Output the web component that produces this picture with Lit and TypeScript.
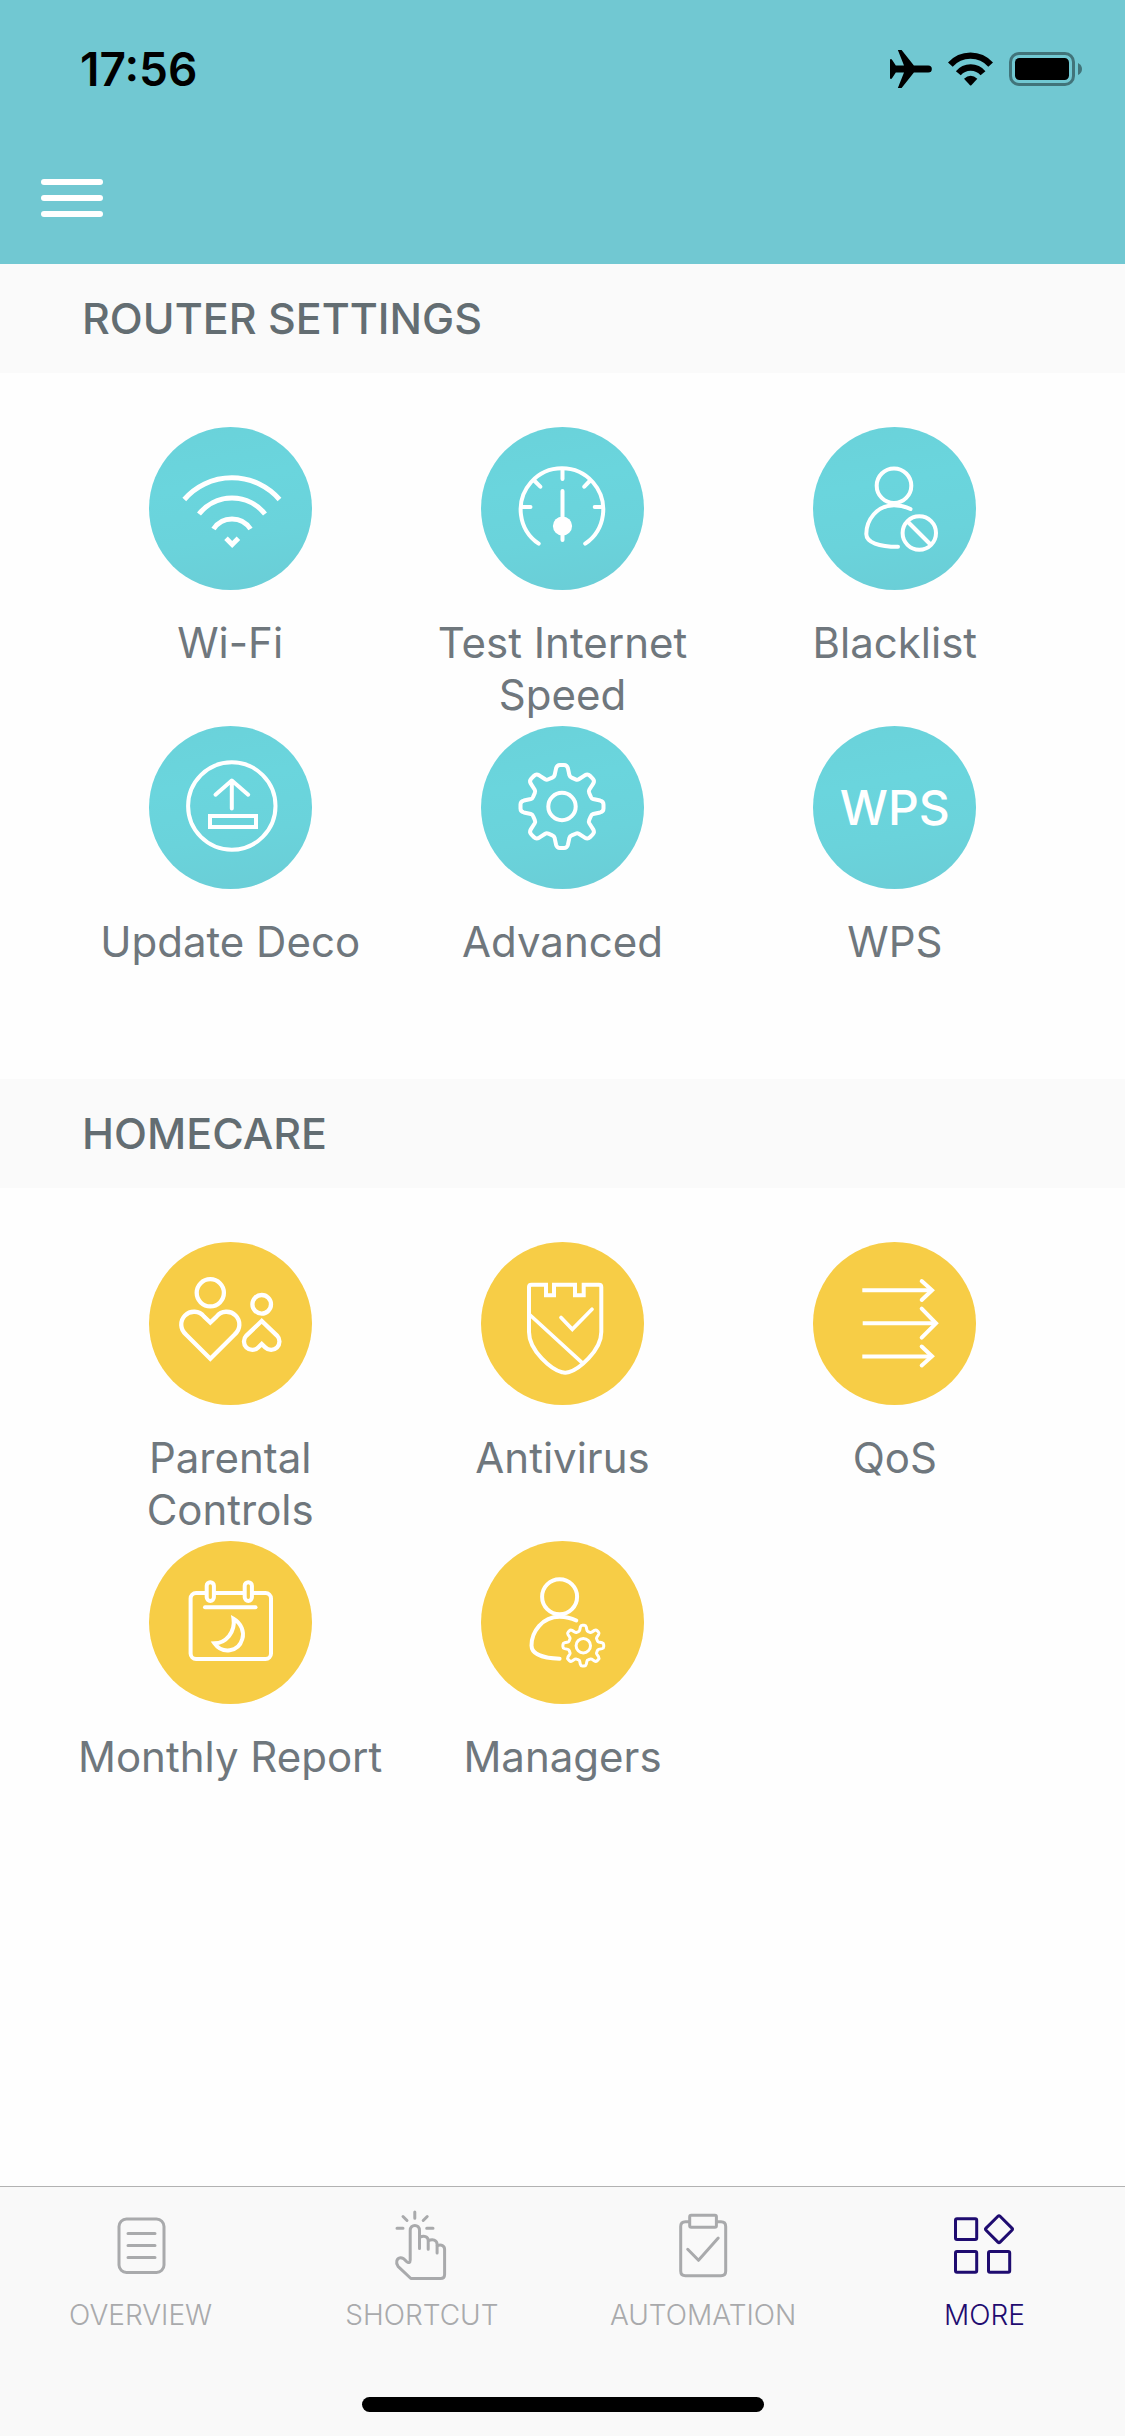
import { LitElement, html, svg, css, nothing, SVGTemplateResult } from "lit";
import { customElement, property } from "lit/decorators.js";

type IconName =
  | "wifi" | "speed" | "blacklist" | "update" | "advanced" | "wps"
  | "parental" | "antivirus" | "qos" | "report" | "managers";
type Tone = "teal" | "amber";

interface Tile {
  label: string;
  icon: IconName;
}

interface Section {
  title: string;
  tone: Tone;
  tiles: Tile[];
}

interface Tab {
  label: string;
  glyph: SVGTemplateResult;
  active?: boolean;
}

/** Outline of an eight-toothed gear whose tooth tips lie `r` from the centre. */
function gearPath(cx: number, cy: number, r: number): string {
  const k = r / 41.3;
  const parts: string[] = [];
  for (let i = 0; i < 8; i++) {
    const a = (i * Math.PI) / 4;
    const p = (x: number, y: number) => {
      const px = cx + k * (x * Math.cos(a) - y * Math.sin(a));
      const py = cy + k * (x * Math.sin(a) + y * Math.cos(a));
      return `${px.toFixed(2)} ${py.toFixed(2)}`;
    };
    parts.push(
      `${i === 0 ? "M" : "L"}${p(28.7, -9.6)}`,
      `Q${p(29.4, -7.8)} ${p(31, -7.4)}`,
      `L${p(38, -5.9)}`,
      `Q${p(41.3, -5)} ${p(41.3, -2)}`,
      `L${p(41.3, 2)}`,
      `Q${p(41.3, 5)} ${p(38, 5.9)}`,
      `L${p(31, 7.4)}`,
      `Q${p(29.4, 7.8)} ${p(28.7, 9.6)}`
    );
  }
  return parts.join("") + "Z";
}

const icons: Record<Exclude<IconName, "wps">, SVGTemplateResult> = {
  wifi: svg`
    <g stroke-width="5" stroke-linecap="butt" stroke-linejoin="miter">
      <path d="M35.300 72.500A63 63 0 0 1 130.500 72.500"/>
      <path d="M50 87A42 42 0 0 1 116 87"/>
      <path d="M64.500 102A22 22 0 0 1 101.500 102"/>
      <path d="M77 111.300L83.200 117.500L89.400 111.300"/>
    </g>`,
  speed: svg`
    <path d="M57.700 116.700A41.300 41.300 0 1 1 104.200 116.700"/>
    <path d="M40 80H49.500M113.700 80H122M53.700 54L59.300 59.700M108.700 54L103.300 59.700M81.500 42V52M81.500 64V113"/>
    <circle cx="81.500" cy="99" r="9.600" fill="#fff" stroke="none"/>`,
  blacklist: svg`
    <circle cx="81" cy="58.700" r="17.300"/>
    <path d="M97.500 82C92 79.300 86.500 78.200 81 78.200C63.500 78.200 53.300 93.500 53.300 107C53.300 115.500 66 119.800 85 119.800"/>
    <circle cx="106.300" cy="106" r="16.700"/>
    <path d="M95 95L117.500 117.500"/>`,
  update: svg`
    <circle cx="82.800" cy="80" r="43.700"/>
    <path d="M66.500 68.700L82.800 54.500L99.200 68.700M82.800 55V82.500"/>
    <rect x="61" y="90" width="46" height="11" stroke-linejoin="miter"/>`,
  advanced: svg`
    <path d="${gearPath(81, 80.5, 41.5)}"/>
    <circle cx="81" cy="80.500" r="13.700"/>`,
  parental: svg`
    <g stroke-width="4.300" stroke-linejoin="miter">
      <circle cx="61.300" cy="50.800" r="13.600"/>
      <path d="M61.300 80.500L55 74.500A12.800 12.800 0 1 0 37 92.500L61.300 116.800L85.600 92.500A12.800 12.800 0 1 0 67.600 74.500Z"/>
      <circle cx="112.700" cy="62.300" r="9.300"/>
      <path d="M112.700 79L97.400 93.600A8.300 8.300 0 1 0 109.200 105.400L112.700 102L116.200 105.400A8.300 8.300 0 1 0 128 93.600Z"/>
    </g>`,
  antivirus: svg`
    <path stroke-linejoin="miter" d="M50.500 42.700H65V53.300H73V42.700H94V53.300H102.700V42.700H118Q120.300 42.700 120.300 45V90C120.300 109 97 128 87.500 130.200Q84.200 131.300 81 130.200C71 128 48 109 48 90V45Q48 42.700 50.500 42.700Z"/>
    <path stroke-width="3.700" d="M49 73L101 120.700"/>
    <path stroke-width="3.700" stroke-linejoin="miter" d="M80 75.500L91.300 87.300L111 67.300"/>`,
  qos: svg`
    <g stroke-linejoin="miter">
      <path stroke-linecap="butt" d="M49.300 48.200H119M49.700 81.300H123M49.300 114.500H119"/>
      <path d="M108.700 39L119 48.300L108.700 58M108.700 66.700L123 81.300L108.700 95.700M108.700 104.500L119 114.300L108.700 123.500"/>
    </g>`,
  report: svg`
    <rect x="41.600" y="52" width="80.400" height="66" rx="5.500"/>
    <rect x="57.700" y="41.200" width="7.200" height="18.700" rx="3.600" fill="#f7cd46"/>
    <rect x="95.700" y="41.200" width="7.200" height="18.700" rx="3.600" fill="#f7cd46"/>
    <path d="M56 66.300H106.500"/>
    <path stroke-linejoin="miter" d="M84.500 77.800C92.500 82.500 95.500 91 93.300 98C89.500 111.500 73 113 65.500 102.300C77 102 86.500 91 84.500 77.800Z"/>`,
  managers: svg`
    <circle cx="78.600" cy="55.700" r="17.500"/>
    <path d="M95.300 79.500C90 77 84 75.800 78.600 75.800C61 75.800 50.500 91 50.500 104.500C50.500 113 62 117.200 78.600 117.700"/>
    <g stroke-width="3">
      <path d="${gearPath(102.3, 104.7, 20.4)}"/>
      <circle cx="102.300" cy="104.700" r="7.200"/>
    </g>`
};

const sections: Section[] = [
  {
    title: "ROUTER SETTINGS",
    tone: "teal",
    tiles: [
      { label: "Wi-Fi", icon: "wifi" },
      { label: "Test Internet Speed", icon: "speed" },
      { label: "Blacklist", icon: "blacklist" },
      { label: "Update Deco", icon: "update" },
      { label: "Advanced", icon: "advanced" },
      { label: "WPS", icon: "wps" }
    ]
  },
  {
    title: "HOMECARE",
    tone: "amber",
    tiles: [
      { label: "Parental Controls", icon: "parental" },
      { label: "Antivirus", icon: "antivirus" },
      { label: "QoS", icon: "qos" },
      { label: "Monthly Report", icon: "report" },
      { label: "Managers", icon: "managers" }
    ]
  }
];

const tabs: Tab[] = [
  {
    label: "OVERVIEW",
    glyph: svg`
      <rect x="16" y="12" width="45" height="53.500" rx="7.500"/>
      <path d="M25 26.400H52M25 38.400H52M25 50.400H52"/>`
  },
  {
    label: "SHORTCUT",
    glyph: svg`
      <path d="M30.800 5V11.300M19 9.500L23 13.500M43.200 9.500L39.200 13.500M13 21.300H19M42.700 21.300H49"/>
      <path d="M35.500 41.500V23.500C35.500 16.700 26.200 16.700 26.200 23.500V53C26.200 56 24.500 56.300 22.500 54.500C20 51.500 18.500 50.700 16.500 50.800C12.500 51.300 11.500 55.500 14 59.300L26.900 71.500H56.500Q60.600 71.500 60.600 67.500V42.500C60.600 38.500 57.500 37.300 53.300 38.500"/>
      <path d="M35.500 30.500C40 28 44.200 29.500 44.200 33.500V42.300M44.200 34C48.500 31.500 53.100 33 53.100 37.500V46"/>`
  },
  {
    label: "AUTOMATION",
    glyph: svg`
      <path d="M24.500 14.700H20.500Q15.700 14.700 15.700 19.500V64Q15.700 68.700 20.500 68.700H56Q60.700 68.700 60.700 64V19.500Q60.700 14.700 56 14.700H51.500"/>
      <rect x="24.700" y="8.300" width="26.700" height="12" rx="1.500"/>
      <path d="M22.700 42.300L33.500 53.300L53.200 31"/>`
  },
  {
    label: "MORE",
    active: true,
    glyph: svg`
      <rect x="9.500" y="11.700" width="21.200" height="20.700" rx="1.500"/>
      <rect x="9.500" y="44.500" width="21.200" height="20.700" rx="1.500"/>
      <rect x="42.500" y="44.500" width="21.200" height="20.700" rx="1.500"/>
      <rect x="43.100" y="12.300" width="19.800" height="19.800" rx="1.500" transform="rotate(45 53 22.200)"/>`
  }
];

@customElement("status-bar")
export class StatusBar extends LitElement {
  static styles = css`
    :host {
      display: flex;
      align-items: center;
      justify-content: space-between;
      box-sizing: border-box;
      height: 132px;
      padding: 6px 43px 0 80px;
      color: #000;
    }
    .time {
      font-size: 46px;
      line-height: 52px;
      font-weight: 600;
    }
    .icons {
      display: flex;
      align-items: center;
      gap: 16px;
    }
    svg {
      display: block;
    }
  `;

  render() {
    return html`
      <span class="time">17:56</span>
      <div class="icons">
        <svg width="42" height="38" viewBox="0 0 123 111" aria-hidden="true">
          <path d="M0 27H5L17 45H41L23 0H34L70 45H112A10.500 10.500 0 0 1 112 66H70L34 111H23L41 66H17L5 84H0Z"/>
        </svg>
        <svg width="45" height="34" viewBox="0 0 135 100" aria-hidden="true">
          <g fill="none" stroke="#000" stroke-width="19">
            <path d="M7 37A81 81 0 0 1 128 37"/>
            <path d="M31 63A48 48 0 0 1 105 63"/>
          </g>
          <path d="M48 79Q68 61 88 79L70 98.500Q68 100 66 98.500Z"/>
        </svg>
        <svg width="73" height="34" viewBox="0 0 73 34" aria-hidden="true">
          <rect x="1.500" y="1.500" width="63" height="31" rx="8.500" fill="none" stroke="#000" stroke-opacity=".42" stroke-width="3"/>
          <rect x="6" y="6" width="54" height="22" rx="4.500"/>
          <path d="M69 11Q73 13 73 17Q73 21 69 23Z" fill-opacity=".42"/>
        </svg>
      </div>
    `;
  }
}

@customElement("settings-tile")
export class SettingsTile extends LitElement {
  static styles = css`
    :host {
      display: flex;
    }
    .tile {
      flex: 1;
      display: flex;
      flex-direction: column;
      align-items: center;
      gap: 27px;
      margin: 0;
      padding: 0 10px;
      border: 0;
      background: none;
      color: #6f777d;
      font: inherit;
      font-size: 42px;
      line-height: 52px;
      text-align: center;
      cursor: pointer;
    }
    .disc {
      display: flex;
      align-items: center;
      justify-content: center;
      flex: none;
      width: 163px;
      height: 163px;
      border-radius: 50%;
      color: #fff;
    }
    .teal {
      background: linear-gradient(170deg, #6ad2da 0%, #6ad5dd 35%, #6ad3db 65%, #6acdd6 100%);
    }
    .amber {
      background: #f7cd46;
    }
    .disc svg {
      display: block;
      width: 100%;
      height: 100%;
      fill: none;
      stroke: #fff;
      stroke-width: 4;
      stroke-linecap: round;
      stroke-linejoin: round;
    }
    .word {
      font-size: 48px;
      font-weight: 500;
    }
  `;

  @property() label = "";
  @property() icon: IconName = "wifi";
  @property() tone: Tone = "teal";

  render() {
    return html`
      <button class="tile" type="button">
        <span class="disc ${this.tone}">
          ${this.icon === "wps"
            ? html`<span class="word">WPS</span>`
            : html`<svg viewBox="0 0 163 163" aria-hidden="true">${icons[this.icon]}</svg>`}
        </span>
        <span>${this.label}</span>
      </button>
    `;
  }
}

@customElement("tab-bar")
export class TabBar extends LitElement {
  static styles = css`
    :host {
      display: flex;
      flex-direction: column;
      align-items: center;
      justify-content: space-between;
      box-sizing: border-box;
      min-height: 250px;
      padding: 20px 0 24px;
      border-top: 1px solid #b2b2b2;
      background: #f9f9f9;
    }
    nav {
      display: grid;
      grid-template-columns: repeat(4, 1fr);
      width: 100%;
    }
    .tab {
      display: flex;
      flex-direction: column;
      align-items: center;
      gap: 16px;
      color: #a9aaac;
      font-size: 28px;
      line-height: 32px;
      font-weight: 300;
      text-decoration: none;
    }
    .active {
      color: #1f0c70;
    }
    .tab svg {
      display: block;
      width: 76px;
      height: 76px;
      fill: none;
      stroke: currentColor;
      stroke-width: 3;
      stroke-linecap: round;
      stroke-linejoin: round;
    }
    .home {
      width: 402px;
      height: 15px;
      border-radius: 8px;
      background: #000;
    }
  `;

  render() {
    return html`
      <nav>
        ${tabs.map(
          (tab) => html`
            <a
              class="tab ${tab.active ? "active" : ""}"
              href="#${tab.label.toLowerCase()}"
              aria-current=${tab.active ? "page" : nothing}
            >
              <svg viewBox="0 0 76 76" aria-hidden="true">${tab.glyph}</svg>
              <span>${tab.label}</span>
            </a>
          `
        )}
      </nav>
      <div class="home"></div>
    `;
  }
}

@customElement("app-root")
export class AppRoot extends LitElement {
  static styles = css`
    :host {
      display: flex;
      flex-direction: column;
      min-height: 100vh;
      background: #fefefe;
      font-family: Inter, "Liberation Sans", sans-serif;
    }
    header {
      background: #71c8d2;
    }
    .toolbar {
      display: flex;
      align-items: center;
      height: 132px;
      padding: 0 41px;
    }
    .menu {
      display: block;
      padding: 0;
      border: 0;
      background: none;
      cursor: pointer;
    }
    .menu svg {
      display: block;
    }
    main {
      flex: 1;
    }
    h2 {
      margin: 0;
      padding: 28px 82px 29px;
      background: #fafafa;
      color: #636d72;
      font-size: 43px;
      line-height: 52px;
      font-weight: 500;
    }
    .grid {
      display: grid;
      grid-template-columns: repeat(3, 1fr);
      grid-auto-rows: minmax(299px, auto);
      padding: 54px 64px;
    }
  `;

  render() {
    return html`
      <header>
        <status-bar></status-bar>
        <div class="toolbar">
          <button class="menu" type="button" aria-label="Menu">
            <svg width="62" height="38" viewBox="0 0 62 38" fill="#fff" aria-hidden="true">
              <rect width="62" height="6" rx="3"/>
              <rect y="16" width="62" height="6" rx="3"/>
              <rect y="32" width="62" height="6" rx="3"/>
            </svg>
          </button>
        </div>
      </header>
      <main>
        ${sections.map(
          (section) => html`
            <section>
              <h2>${section.title}</h2>
              <div class="grid">
                ${section.tiles.map(
                  (tile) => html`
                    <settings-tile .label=${tile.label} .icon=${tile.icon} .tone=${section.tone}></settings-tile>
                  `
                )}
              </div>
            </section>
          `
        )}
      </main>
      <tab-bar></tab-bar>
    `;
  }
}
